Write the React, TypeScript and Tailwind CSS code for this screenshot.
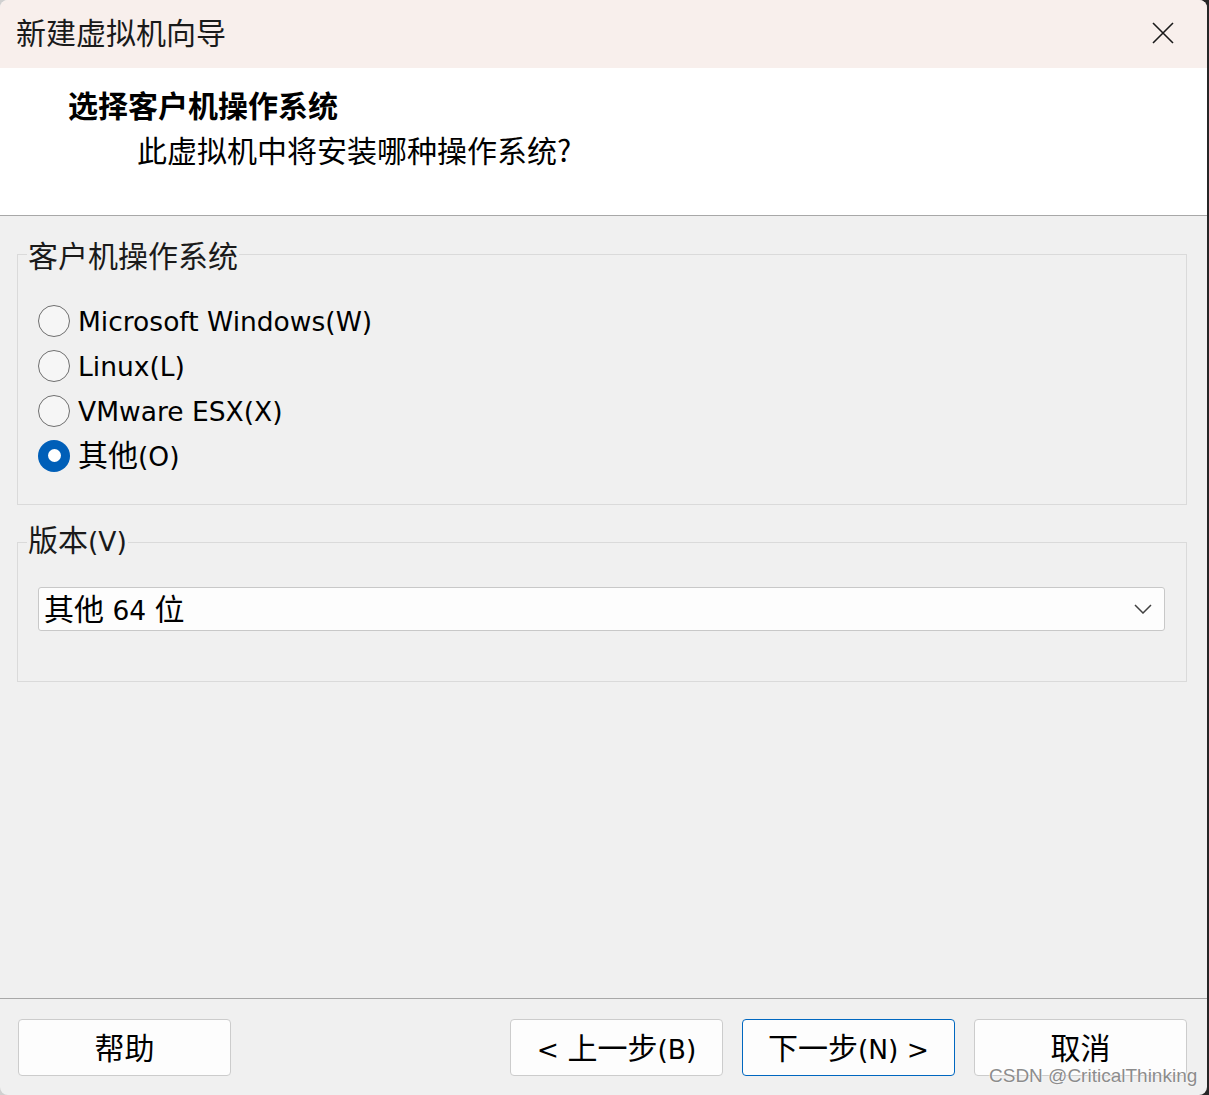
const cjk = "font-['Noto_Sans_CJK_SC',sans-serif]";
const latin = "font-['DejaVu_Sans','Noto_Sans_CJK_SC',sans-serif]";

function Radio({ label, checked }: { label: React.ReactNode; checked?: boolean }) {
  return (
    <div className="flex items-center h-[45px]">
      {checked ? (
        <span className="w-[32px] h-[32px] rounded-full bg-[#005fb8] flex items-center justify-center">
          <span className="w-[13px] h-[13px] rounded-full bg-white" />
        </span>
      ) : (
        <span className="w-[32px] h-[32px] rounded-full border-[1.5px] border-[#6f6f6f] bg-[#f6f6f6]" />
      )}
      <span className={`ml-[8px] pt-[3px] text-[26.5px] text-black ${latin}`}>{label}</span>
    </div>
  );
}

function Btn({ children, primary }: { children: React.ReactNode; primary?: boolean }) {
  return (
    <button
      className={`w-[213px] h-[57px] rounded-[4px] bg-[#fdfdfd] border flex items-center justify-center pt-[4px] text-[26.5px] text-black ${latin} ${
        primary ? "border-[#0067c0]" : "border-[#cccccc]"
      }`}
    >
      <span>{children}</span>
    </button>
  );
}

const Zh = ({ children }: { children: React.ReactNode }) => (
  <span className={`text-[30px] leading-none ${cjk}`}>{children}</span>
);

export default function App() {
  return (
    <div className="w-[1209px] h-[1095px] flex bg-linear-to-r from-[#d0d0d0] from-50% to-[#262626] to-50%">
      <div className="relative w-[1207px] h-full rounded-[8px] overflow-hidden bg-[#f0f0f0] flex flex-col">
        {/* title bar */}
        <div className="h-[68px] bg-[#f8efec] flex items-center justify-between pl-[16px] pr-[33px] shrink-0">
          <span className={`text-[30px] leading-[40px] -mt-[6px] text-[#1a1a1a] ${cjk}`}>新建虚拟机向导</span>
          <svg width="22" height="22" viewBox="0 0 22 22" className="text-[#1a1a1a] -mt-[2px]">
            <path d="M1 1 L21 21 M21 1 L1 21" stroke="currentColor" strokeWidth="1.6" />
          </svg>
        </div>

        {/* header */}
        <div className="h-[148px] bg-white border-b border-[#a8a8a8] shrink-0 pt-[16px]">
          <div className={`pl-[68px] text-[30px] leading-[40px] font-bold text-black ${cjk}`}>选择客户机操作系统</div>
          <div className={`pl-[137px] mt-[5px] text-[30px] leading-[40px] text-black ${cjk}`}>此虚拟机中将安装哪种操作系统?</div>
        </div>

        {/* body */}
        <div className="flex-1 px-[17px] pr-[20px]">
          <fieldset className="mt-[18px] border border-[#dadada] pl-[20px] pt-[24px] pb-[26px]">
            <legend className={`-ml-[11px] px-[1px] text-[30px] leading-[40px] text-[#1a1a1a] ${cjk}`}>客户机操作系统</legend>
            <Radio label="Microsoft Windows(W)" />
            <Radio label="Linux(L)" />
            <Radio label="VMware ESX(X)" />
            <Radio
              checked
              label={
                <>
                  <Zh>其他</Zh>(O)
                </>
              }
            />
          </fieldset>

          <fieldset className="mt-[17px] border border-[#dadada] pl-[20px] pr-[21px] pt-[25px] pb-[50px]">
            <legend className={`-ml-[11px] px-[1px] text-[26.5px] leading-[40px] text-[#1a1a1a] ${latin}`}>
              <Zh>版本</Zh>(V)
            </legend>
            <div className={`h-[44px] bg-[#fdfdfd] border border-[#c8c8c8] rounded-[3px] flex items-center justify-between pl-[5px] pr-[12px] pt-[4px] text-[26.5px] text-black ${latin}`}>
              <span>
                <Zh>其他</Zh> 64 <Zh>位</Zh>
              </span>
              <svg width="18" height="10" viewBox="0 0 18 10" className="-mt-[4px]">
                <path d="M1 1 L9 9 L17 1" fill="none" stroke="#404040" strokeWidth="1.5" />
              </svg>
            </div>
          </fieldset>
        </div>

        {/* footer */}
        <div className="h-[97px] shrink-0 border-t border-[#a8a8a8] flex items-start justify-between pl-[18px] pr-[20px] pt-[20px]">
          <Btn>
            <Zh>帮助</Zh>
          </Btn>
          <div className="flex gap-[19px]">
            <Btn>
              &lt; <Zh>上一步</Zh>(B)
            </Btn>
            <Btn primary>
              <Zh>下一步</Zh>(N) &gt;
            </Btn>
            <Btn>
              <Zh>取消</Zh>
            </Btn>
          </div>
        </div>

        <span className="absolute left-[989px] top-[1062px] text-[19px] text-[#8c8c8c] font-['Liberation_Sans',sans-serif] [text-shadow:0_0_2px_#ffffff,0_0_1px_#ffffff]">
          CSDN @CriticalThinking
        </span>
      </div>
      <div className="w-[2px] h-full bg-[#262626]" />
    </div>
  );
}
